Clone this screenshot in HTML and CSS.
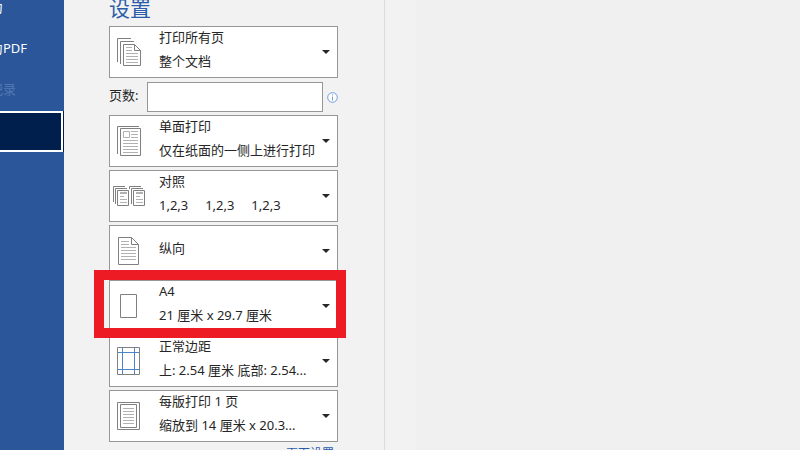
FILE: index.html
```html
<!DOCTYPE html>
<html lang="zh-CN">
<head>
    <meta charset="UTF-8">
    <meta name="viewport" content="width=device-width, initial-scale=1.0">
    <title>打印</title>
    <link rel="stylesheet" href="styles.css">
</head>
<body>
    <nav class="sidebar">
        <div class="menu">
            <button class="menu-item">另存为</button>
            <button class="menu-item">另存为PDF</button>
            <button class="menu-item" disabled>历史记录</button>
            <button class="menu-item active">打印</button>
        </div>
    </nav>

    <main class="settings">
        <h2>设置</h2>

        <div class="options">
            <button class="option" aria-haspopup="listbox">
                <svg class="icon" viewBox="0 0 48 50">
                    <path class="paper" d="M7.5 35V11.5H21M10.5 37V14.5H24M13.5 17.5H24.5L30.5 23.5V38.5H13.5ZM24.5 17.5V23.5H30.5"/>
                    <path class="lines" d="M16 20.5H22M16 23.5H22M16 26.5H28M16 29.5H28M16 32.5H28M16 35.5H28"/>
                </svg>
                <span class="text"><span>打印所有页</span><span>整个文档</span></span>
                <span class="arrow"></span>
            </button>

            <div class="pages">
                <label for="pages">页数:</label>
                <input type="text" id="pages">
                <svg class="info" viewBox="0 0 11 11">
                    <circle cx="5.5" cy="5.5" r="4.8"/>
                    <path d="M5.5 2.5V3.5M5.5 4.5V8.5"/>
                </svg>
            </div>

            <button class="option" aria-haspopup="listbox">
                <svg class="icon" viewBox="0 0 48 50">
                    <path class="paper" d="M7.5 38V10.5H29M10.5 12.5H30.5V39.5H10.5Z"/>
                    <path class="lines" d="M13.5 15.5H19.5V21.5H13.5ZM21 15.5H28M21 18.5H28M21 21.5H28M13 24.5H28M13 27.5H28M13 30.5H28M13 33.5H28M13 36.5H28"/>
                </svg>
                <span class="text"><span>单面打印</span><span>仅在纸面的一侧上进行打印</span></span>
                <span class="arrow"></span>
            </button>

            <button class="option" aria-haspopup="listbox">
                <svg class="icon" viewBox="0 0 48 50">
                    <path class="paper" d="M3.5 31V15.5H15M5.5 33V17.5H17M7.5 19.5H18.5V34.5H7.5ZM19.5 18V15.5H31M21.5 33V17.5H33M23.5 19.5H34.5V34.5H23.5Z"/>
                    <path class="lines" d="M10 21.5H17M10 22.5H17M10 25.5H14M10 28.5H17M10 31.5H17M26 21.5H33M26 22.5H33M26 25.5H30M26 28.5H33M26 31.5H33"/>
                </svg>
                <span class="text"><span>对照</span><span>1,2,3     1,2,3     1,2,3</span></span>
                <span class="arrow"></span>
            </button>

            <button class="option" aria-haspopup="listbox">
                <svg class="icon" viewBox="0 0 48 50">
                    <path class="paper" d="M8.5 11.5H21.5L28.5 18.5V38.5H8.5ZM21.5 11.5V18.5H28.5"/>
                    <path class="lines" d="M11 15.5H19M11 18.5H19M11 21.5H26M11 24.5H26M11 27.5H26M11 30.5H26M11 33.5H26"/>
                </svg>
                <span class="text"><span>纵向</span></span>
                <span class="arrow"></span>
            </button>

            <div class="highlight">
                <button class="option" aria-haspopup="listbox">
                    <svg class="icon" viewBox="0 0 48 50">
                        <path class="paper" d="M10.5 13.5H26.5V36.5H10.5Z"/>
                    </svg>
                    <span class="text"><span>A4</span><span>21 厘米 x 29.7 厘米</span></span>
                    <span class="arrow"></span>
                </button>
            </div>

            <button class="option" aria-haspopup="listbox">
                <svg class="icon" viewBox="0 0 48 50">
                    <path class="guides" d="M12.5 12V38M24.5 12V38M8 16.5H29M8 33.5H29"/>
                    <path class="paper" d="M7.5 11.5H29.5V38.5H7.5Z"/>
                </svg>
                <span class="text"><span>正常边距</span><span>上: 2.54 厘米 底部: 2.54...</span></span>
                <span class="arrow"></span>
            </button>

            <button class="option" aria-haspopup="listbox">
                <svg class="icon" viewBox="0 0 48 50">
                    <path class="paper" d="M7.5 11.5H29.5V38.5H7.5ZM10.5 13.5H26.5V36.5H10.5Z"/>
                    <path class="lines" d="M13 17.5H24M13 20.5H24M13 23.5H24M13 26.5H24M13 29.5H24M13 32.5H24"/>
                </svg>
                <span class="text"><span>每版打印 1 页</span><span>缩放到 14 厘米 x 20.3...</span></span>
                <span class="arrow"></span>
            </button>
        </div>

        <a class="page-setup" href="#">页面设置</a>
    </main>

    <section class="preview"></section>
</body>
</html>
```

FILE: styles.css
```css
*,
*::after {
    box-sizing: border-box;
}

body {
    display: flex;
    height: 100vh;
    margin: 0;
    overflow: hidden;
    font-family: "Noto Sans", "Noto Sans CJK SC", sans-serif;
    font-size: 13px;
    color: #262626;
    background-color: #f2f2f2;
}

button,
input {
    font: inherit;
    color: inherit;
}

/* Левое меню */
.sidebar {
    flex: none;
    width: 64px;
    overflow: hidden;
    background-color: #2b579a;
}

.menu {
    display: flex;
    flex-direction: column;
    width: 127px;
    margin: -12px 0 0 -64px;
}

.menu-item {
    height: 41px;
    padding: 0 26px 4px;
    border: 2px solid transparent;
    background: none;
    color: white;
    text-align: left;
}

.menu-item:disabled {
    color: #5079b3;
}

.menu-item.active {
    border-color: white;
    background-color: #001f4d;
    box-shadow: 1px 0 #001f4d;
}

/* Настройки печати */
.settings {
    flex: none;
    display: flex;
    flex-direction: column;
    width: 321px;
    padding: 0 46px 0 45px;
    border-right: 1px solid #dcdcdc;
    overflow: hidden;
}

h2 {
    margin: 0 0 10px;
    font-size: 21px;
    font-weight: normal;
    line-height: 16px;
    color: #2a5caa;
}

.options {
    display: flex;
    flex-direction: column;
    gap: 3px;
}

.option {
    display: flex;
    align-items: center;
    width: 100%;
    height: 52px;
    padding: 0 7px 0 0;
    border: 1px solid #969696;
    background-color: white;
    text-align: left;
}

.icon {
    flex: none;
    width: 48px;
    height: 50px;
    fill: none;
}

.paper {
    stroke: #808080;
}

.lines {
    stroke: #b1b1b1;
}

.guides {
    stroke: #4a86c5;
}

.text {
    flex: 1;
    display: flex;
    flex-direction: column;
    padding: 0 0 6px 1px;
    line-height: 24px;
    white-space: pre;
}

.arrow {
    border: 4px solid transparent;
    border-top-color: #262626;
    border-bottom: none;
}

.pages {
    display: flex;
    align-items: center;
    padding-top: 1px;
}

.pages label {
    width: 38px;
    padding-bottom: 6px;
}

.pages input {
    flex: 1;
    min-width: 0;
    height: 30px;
    border: 1px solid #969696;
    background-color: white;
}

.info {
    width: 11px;
    height: 11px;
    margin-left: 4px;
    fill: white;
    stroke: #6f9bd8;
}

.highlight {
    position: relative;
}

.highlight::after {
    content: "";
    position: absolute;
    top: -10px;
    left: -15px;
    z-index: 1;
    width: 252px;
    height: 68px;
    border: 10px solid #ed1c24;
    pointer-events: none;
}

.page-setup {
    align-self: flex-end;
    margin: 2px 4px 0 0;
    font-size: 12px;
    color: #2a5caa;
    text-decoration: none;
}

/* Предпросмотр */
.preview {
    flex: 1;
    margin-left: 31px;
    background-color: #f0f0f0;
}
```
